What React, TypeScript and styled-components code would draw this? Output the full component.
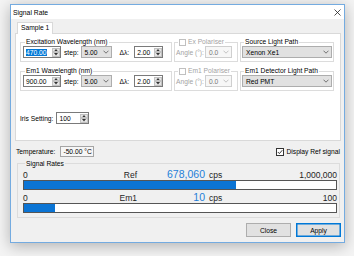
import React from 'react';
import styled, { createGlobalStyle } from 'styled-components';

const Global = createGlobalStyle`
  html, body { margin: 0; padding: 0; }
  body {
    background: #f4f4f4;
    width: 354px;
    height: 256px;
    overflow: hidden;
    font-family: "Liberation Sans", Arial, sans-serif;
  }
  * { box-sizing: border-box; }
`;

const Stage = styled.div`
  padding: 4px 0 0 10px;
`;

const Window = styled.div`
  width: 335px;
  height: 239px;
  border: 1px solid #74abe0;
  background: #f0f0f0;
  box-shadow: 0 3px 14px rgba(0, 0, 0, 0.28);
  display: flex;
  flex-direction: column;
  font-size: 6.7px;
  color: #000;
`;

const TitleBar = styled.div`
  height: 14px;
  flex: none;
  background: #fff;
  display: flex;
  align-items: center;
  justify-content: space-between;
  padding: 0 3px 0 2px;
  font-size: 6.8px;
`;

const Body = styled.div`
  flex: 1;
  display: flex;
  flex-direction: column;
  padding: 3px 3px 5px 4px;
`;

const TabStrip = styled.div`
  height: 11px;
  display: flex;
  padding-left: 2px;
`;

const Tab = styled.div`
  position: relative;
  z-index: 1;
  height: 12px;
  padding: 0 3px;
  border: 1px solid #d9d9d9;
  border-bottom: none;
  background: #fff;
  line-height: 10px;
`;

const Panel = styled.div`
  height: 108px;
  flex: none;
  background: #fff;
  border: 1px solid #d9d9d9;
  padding: 4px 4px 0 4px;
  display: flex;
  flex-direction: column;
`;

const GroupGrid = styled.div`
  display: grid;
  grid-template-columns: 152px 64px 94px;
  column-gap: 2px;
  row-gap: 5px;
`;

const Group = styled.fieldset<{ $pad?: string }>`
  margin: 0;
  min-width: 0;
  border: 1px solid #dcdcdc;
  padding: ${p => p.$pad ?? '0 2px 3px 2px'};
`;

const Legend = styled.legend<{ $disabled?: boolean }>`
  padding: 0 1px;
  margin-left: 2px;
  height: 8px;
  line-height: 8px;
  color: ${p => (p.$disabled ? '#a3a3a3' : '#000')};
  display: flex;
  align-items: center;
  gap: 2px;
`;

const Row = styled.div`
  display: flex;
  align-items: center;
  height: 12px;
`;

const Label = styled.span<{ $ml?: number; $disabled?: boolean }>`
  margin-left: ${p => p.$ml ?? 0}px;
  color: ${p => (p.$disabled ? '#a3a3a3' : '#000')};
  white-space: nowrap;
`;

const SpinBox = styled.div<{ $w: number; $ml?: number }>`
  width: ${p => p.$w}px;
  height: 12px;
  margin-left: ${p => p.$ml ?? 0}px;
  border: 1px solid #7a7a7a;
  background: #fff;
  display: flex;
`;

const SpinText = styled.div`
  flex: 1;
  padding-left: 2px;
  display: flex;
  align-items: center;
`;

const Selected = styled.span`
  background: #0078d7;
  color: #fff;
  padding-right: 1px;
`;

const SpinButtons = styled.div`
  width: 8px;
  display: flex;
  flex-direction: column;
  gap: 0;
  padding: 0.5px 0.5px 0.5px 0;
`;

const SpinBtn = styled.div`
  flex: 1;
  background: #e4e4e4;
  border: 1px solid #c2c2c2;
  display: flex;
  align-items: center;
  justify-content: center;
`;

const Combo = styled.div<{ $w?: number; $ml?: number; $disabled?: boolean }>`
  width: ${p => (p.$w ? `${p.$w}px` : '100%')};
  height: 12px;
  margin-left: ${p => p.$ml ?? 0}px;
  border: 1px solid ${p => (p.$disabled ? '#cfcfcf' : '#adadad')};
  background: ${p => (p.$disabled ? '#f7f7f7' : '#e1e1e1')};
  color: ${p => (p.$disabled ? '#777' : '#000')};
  display: flex;
  align-items: center;
  justify-content: space-between;
  padding: 0 2px 0 3px;
`;

const Check = styled.span<{ $size: number; $disabled?: boolean }>`
  width: ${p => p.$size}px;
  height: ${p => p.$size}px;
  border: 1px solid ${p => (p.$disabled ? '#c0c0c0' : '#333')};
  background: #fff;
  display: inline-flex;
  align-items: center;
  justify-content: center;
  flex: none;
`;

const IrisRow = styled(Row)`
  margin-top: 21px;
`;

const InfoRow = styled.div`
  margin-top: 5px;
  height: 11px;
  display: flex;
  align-items: center;
  justify-content: space-between;
  padding: 0 1px;
`;

const InfoLeft = styled.div`
  display: flex;
  align-items: center;
`;

const ReadOnly = styled.div`
  margin-left: 5px;
  width: 34px;
  height: 11px;
  border: 1px solid #a5a5a5;
  background: #f6f6f6;
  padding-left: 2px;
  display: flex;
  align-items: center;
`;

const CheckLabel = styled.label`
  display: flex;
  align-items: center;
  gap: 2px;
`;

const SignalGroup = styled(Group)`
  margin: 2.5px 1px 0 2px;
  padding: 0 2px 4px 5px;
`;

const RateRow = styled.div<{ $pt: number }>`
  display: grid;
  grid-template-columns: 40px 74px 68px auto 1fr;
  align-items: baseline;
  font-size: 8.5px;
  line-height: 11px;
  height: ${p => 11 + p.$pt}px;
  padding-top: ${p => p.$pt}px;
  color: #1e1e1e;
`;

const RateLabel = styled.span`
  text-align: right;
`;

const RateValue = styled.span`
  text-align: right;
  font-size: 10.5px;
  color: #1f7fd8;
`;

const Unit = styled.span`
  padding-left: 4px;
`;

const RateMax = styled.span`
  text-align: right;
`;

const Bar = styled.div`
  height: 10px;
  border: 1px solid #555;
  background: #fff;
`;

const BarFill = styled.div`
  height: 100%;
  background: #0b74d4;
`;

const ButtonRow = styled.div`
  margin-top: auto;
  display: flex;
  justify-content: flex-end;
  gap: 5px;
`;

const Button = styled.button<{ $default?: boolean }>`
  width: 45px;
  height: 14px;
  padding: 0;
  font: inherit;
  color: #000;
  background: #e1e1e1;
  border: 1px solid ${p => (p.$default ? '#0078d7' : '#adadad')};
  box-shadow: ${p => (p.$default ? 'inset 0 0 0 0.5px #0078d7' : 'none')};
`;

const Chevron = ({ color = '#555' }: { color?: string }) => (
  <svg width="6" height="4" viewBox="0 0 6 4">
    <polyline points="0.5,0.7 3,3.2 5.5,0.7" fill="none" stroke={color} strokeWidth="0.8" />
  </svg>
);

const Tri = ({ up }: { up?: boolean }) => (
  <svg width="4" height="2.5" viewBox="0 0 4 2.5">
    <polygon points={up ? '0,2.5 2,0 4,2.5' : '0,0 2,2.5 4,0'} fill="#333" />
  </svg>
);

const Spin = ({ value, w, ml, selected }: { value: string; w: number; ml?: number; selected?: boolean }) => (
  <SpinBox $w={w} $ml={ml}>
    <SpinText>{selected ? <Selected>{value}</Selected> : value}</SpinText>
    <SpinButtons>
      <SpinBtn><Tri up /></SpinBtn>
      <SpinBtn><Tri /></SpinBtn>
    </SpinButtons>
  </SpinBox>
);

const Tick = () => (
  <svg width="6" height="6" viewBox="0 0 6 6">
    <polyline points="0.8,3 2.4,4.6 5.3,1.2" fill="none" stroke="#222" strokeWidth="0.9" />
  </svg>
);

const WavelengthGroup = ({ title, value, selected }: { title: string; value: string; selected?: boolean }) => (
  <Group>
    <Legend>{title}</Legend>
    <Row>
      <Spin value={value} w={38} selected={selected} />
      <Label $ml={3}>step:</Label>
      <Combo $w={31} $ml={2}>
        <span>5.00</span>
        <Chevron />
      </Combo>
      <Label $ml={8}>Δλ:</Label>
      <Spin value="2.00" w={29} ml={5} />
    </Row>
  </Group>
);

const PolariserGroup = ({ title }: { title: string }) => (
  <Group $pad="0 1px 3px 1px">
    <Legend $disabled>
      <Check $size={7} $disabled />
      {title}
    </Legend>
    <Row>
      <Label $disabled>Angle (°):</Label>
      <Combo $w={27} $ml={1} $disabled>
        <span>0.0</span>
        <Chevron color="#b5b5b5" />
      </Combo>
    </Row>
  </Group>
);

const PathGroup = ({ title, value }: { title: string; value: string }) => (
  <Group $pad="0 1px 3px 1px">
    <Legend>{title}</Legend>
    <Row>
      <Combo>
        <span>{value}</span>
        <Chevron />
      </Combo>
    </Row>
  </Group>
);

const rates = [
  { label: 'Ref', value: 678060, max: 1000000 },
  { label: 'Em1', value: 10, max: 100 },
];

const fmt = (n: number) => n.toLocaleString('en-US');

export default function App() {
  return (
    <>
      <Global />
      <Stage>
        <Window>
          <TitleBar>
            <span>Signal Rate</span>
            <svg width="7" height="7" viewBox="0 0 7 7">
              <path d="M0.5 0.5L6.5 6.5M6.5 0.5L0.5 6.5" stroke="#222" strokeWidth="0.8" />
            </svg>
          </TitleBar>
          <Body>
            <TabStrip>
              <Tab>Sample 1</Tab>
            </TabStrip>
            <Panel>
              <GroupGrid>
                <WavelengthGroup title="Excitation Wavelength (nm)" value="470.00" selected />
                <PolariserGroup title="Ex Polariser" />
                <PathGroup title="Source Light Path" value="Xenon Xe1" />
                <WavelengthGroup title="Em1 Wavelength (nm)" value="900.00" />
                <PolariserGroup title="Em1 Polariser" />
                <PathGroup title="Em1 Detector Light Path" value="Red PMT" />
              </GroupGrid>
              <IrisRow>
                <Label>Iris Setting:</Label>
                <Spin value="100" w={33} ml={3} />
              </IrisRow>
            </Panel>
            <InfoRow>
              <InfoLeft>
                <Label>Temperature:</Label>
                <ReadOnly>-50.00 °C</ReadOnly>
              </InfoLeft>
              <CheckLabel>
                <Check $size={8}><Tick /></Check>
                Display Ref signal
              </CheckLabel>
            </InfoRow>
            <SignalGroup>
              <Legend>Signal Rates</Legend>
              {rates.map((r, i) => (
                <React.Fragment key={r.label}>
                  <RateRow $pt={i === 0 ? 1 : 2}>
                    <span>0</span>
                    <RateLabel>{r.label}</RateLabel>
                    <RateValue>{fmt(r.value)}</RateValue>
                    <Unit>cps</Unit>
                    <RateMax>{fmt(r.max)}</RateMax>
                  </RateRow>
                  <Bar>
                    <BarFill style={{ width: `${(r.value / r.max) * 100}%` }} />
                  </Bar>
                </React.Fragment>
              ))}
            </SignalGroup>
            <ButtonRow>
              <Button>Close</Button>
              <Button $default>Apply</Button>
            </ButtonRow>
          </Body>
        </Window>
      </Stage>
    </>
  );
}
